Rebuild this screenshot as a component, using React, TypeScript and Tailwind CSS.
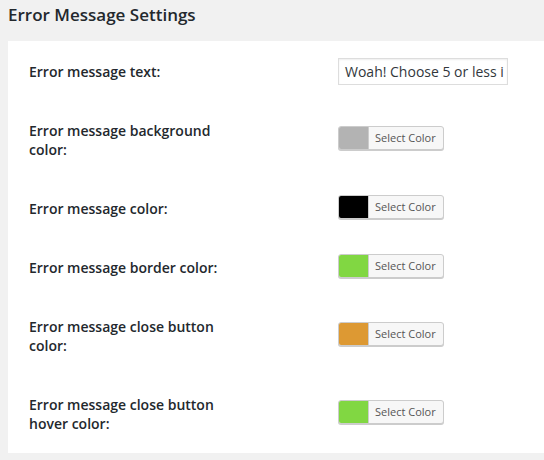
const rows = [
  { label: "Error message text:", kind: "text", h: "h-[59px]" },
  { label: "Error message background color:", kind: "color", color: "#b3b3b3", h: "h-[78px]" },
  { label: "Error message color:", kind: "color", color: "#000000", h: "h-[59px]" },
  { label: "Error message border color:", kind: "color", color: "#81d742", h: "h-[59px]" },
  { label: "Error message close button color:", kind: "color", color: "#dd9933", h: "h-[78px]" },
  { label: "Error message close button hover color:", kind: "color", color: "#81d742", h: "h-[78px]" },
];

const ColorButton = ({ color }: { color: string }) => (
  <button
    type="button"
    className="flex h-[24px] w-[106px] overflow-hidden rounded-[3px] border border-[#cccccc] bg-[#f7f7f7] p-0 shadow-[0_1px_0_#cccccc]"
  >
    <span className="block h-full w-[30px] border-r border-[#cccccc]" style={{ backgroundColor: color }} />
    <span className="pl-[6px] text-[11px] leading-[22px] text-[#555555]">Select Color</span>
  </button>
);

export default function App() {
  return (
    <div className="min-h-[460px] w-[544px] bg-[#f1f1f1] font-['Open_Sans',sans-serif] text-[#23282d]">
      <div className="h-[41px] pl-[8px] pt-[3px]">
        <h2 className="text-[17px] font-semibold leading-[24px]">Error Message Settings</h2>
      </div>
      <div className="ml-[8px] bg-white pt-[1px]">
        {rows.map((row) => (
          <div key={row.label} className={`flex ${row.h}`}>
            <div className="w-[330px] shrink-0 pl-[21px] pt-[20px]">
              <div className="w-[205px] text-[14px] font-semibold leading-[19px]">{row.label}</div>
            </div>
            {row.kind === "text" ? (
              <div className="flex items-center">
                <div className="h-[27px] w-[170px] overflow-hidden whitespace-nowrap border border-[#dddddd] pl-[6px] text-[14px] leading-[25px] text-[#32373c] shadow-[inset_0_1px_2px_rgba(0,0,0,0.07)]">
                  Woah! Choose 5 or less i
                </div>
              </div>
            ) : (
              <div className="flex items-center pb-[4px]">
                <ColorButton color={row.color!} />
              </div>
            )}
          </div>
        ))}
      </div>
    </div>
  );
}
